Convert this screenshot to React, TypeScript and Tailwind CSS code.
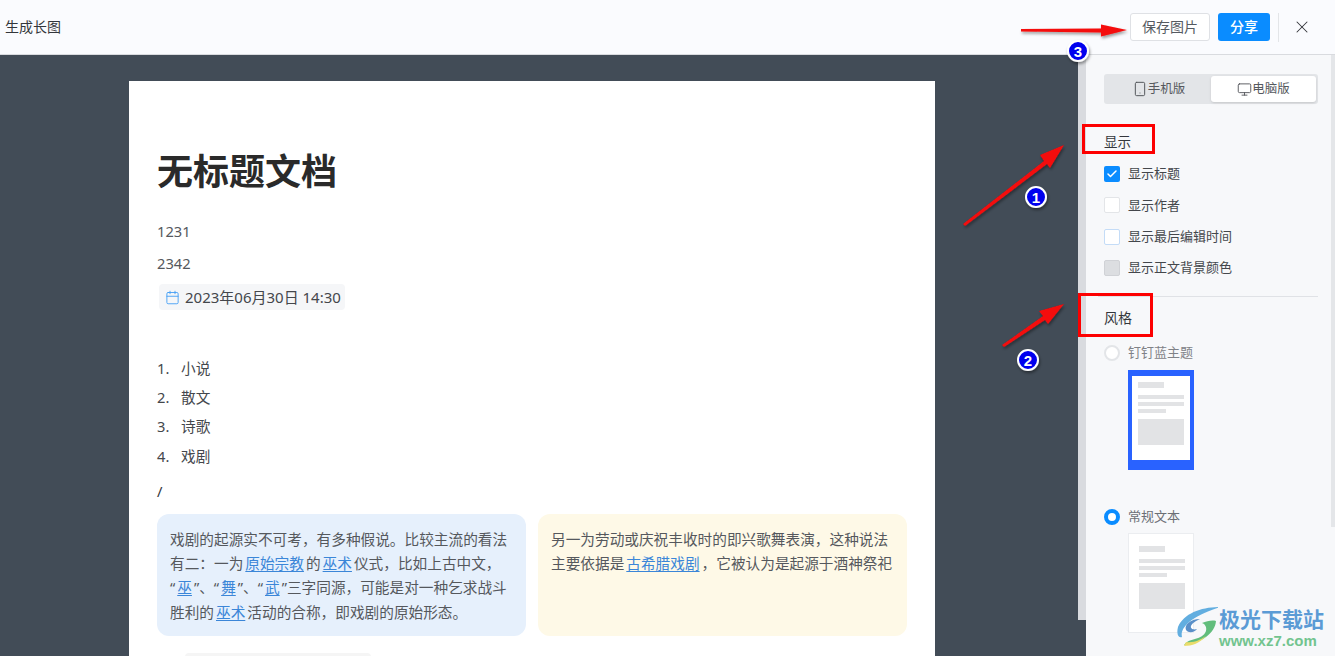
import { Calendar, Check, Monitor, Smartphone, X } from 'lucide-react';

const FONT = "font-['Noto_Sans','Noto_Sans_CJK_SC',sans-serif]";

function A({ children }: { children: string }) {
    return <span className="text-[#3b86d8] underline underline-offset-2 mx-[2px]">{children}</span>;
}

function OptionRow({ label, box }: { label: string; box: string }) {
    return (
        <div className="flex items-center h-[16px] gap-2 text-[13px] text-[#44474c]">
            <span className={`w-4 h-4 rounded-[2px] flex items-center justify-center ${box}`}>
                {box.includes('bg-[#0a8cff]') && <Check size={12} strokeWidth={3} className="text-white" />}
            </span>
            {label}
        </div>
    );
}

function Thumb({ border }: { border: string }) {
    return (
        <div className={`ml-6 w-[66px] h-[100px] bg-white flex flex-col ${border}`}>
            <div className="w-[26px] h-[6px] bg-[#e2e3e5]" />
            <div className="w-[46px] h-1 bg-[#e2e3e5] mt-[7px]" />
            <div className="w-[46px] h-1 bg-[#e2e3e5] mt-[3px]" />
            <div className="w-[28px] h-1 bg-[#e2e3e5] mt-[3px]" />
            <div className="w-[46px] h-[26px] bg-[#e2e3e5] mt-[6px]" />
        </div>
    );
}

function Annotations() {
    return (
        <>
            <svg className="absolute left-0 top-0 pointer-events-none" width="1335" height="656">
                <defs>
                    <filter id="sh" x="-20%" y="-20%" width="140%" height="140%">
                        <feDropShadow dx="1" dy="2" stdDeviation="1.5" floodColor="#000" floodOpacity="0.4" />
                    </filter>
                </defs>
                <g fill="#f40a0a" filter="url(#sh)">
                    <path d="M1021 29 L1101 28.5 L1101 24.5 L1127 30 L1101 36.5 L1101 32.5 L1021 31.5 Z" />
                    <path d="M963 224 L1044 161 L1040 155 L1064 145 L1050 168 L1047 164 L965 226 Z" />
                    <path d="M1002 345 L1043 316 L1039 311 L1064 304 L1048 324 L1045 320 L1004 347 Z" />
                </g>
                <g fill="none" stroke="#fd0000" strokeWidth="3">
                    <rect x="1083.5" y="125.5" width="70" height="27" />
                    <rect x="1079.5" y="294.5" width="72" height="41" />
                </g>
                <g stroke="#fff" strokeWidth="2" fill="#0000ee" filter="url(#sh)">
                    <circle cx="1078" cy="51" r="10" />
                    <circle cx="1036" cy="197" r="10" />
                    <circle cx="1028" cy="360" r="10" />
                </g>
                <g fill="#fff" fontSize="15" fontWeight="700" textAnchor="middle" fontFamily="'Liberation Sans', sans-serif">
                    <text x="1078" y="56.5">3</text>
                    <text x="1036" y="202.5">1</text>
                    <text x="1028" y="365.5">2</text>
                </g>
            </svg>
            {/* watermark */}
            <div className="absolute left-[1176px] top-[605px] flex items-start gap-[1px] pointer-events-none">
                <svg width="42" height="42" viewBox="0 0 42 42" fill="none">
                    <path d="M44 2 C26 2 8 8 2 22 C0 30 3 33 6 32 C4 24 12 12 44 2 Z" fill="#62aee0" />
                    <path d="M24 14 C14 14 8 20 10 25 C13 29 19 27 21 24 C18 25 14 24 15 21 C16 18 20 16 24 14 Z" fill="#5a8fc8" />
                    <path d="M40 16 C39 28 26 38 8 40 C14 32 26 36 30 26 C31 22 29 19 26 18 C31 16 36 15 40 16 Z" fill="#62bd7c" />
                    <path d="M30 31 C24 38 16 41 8 41 L10 37 C18 38 24 35 30 31 Z" fill="#e9dc6a" />
                </svg>
                <div className="flex flex-col font-bold leading-none font-['Noto_Sans_CJK_SC',sans-serif]">
                    <span className="text-[21px] text-[#5b9bd5] leading-[26px]">极光下载站</span>
                    <span className="text-[15px] text-[#72c48f] mt-[2px] font-['Liberation_Sans',sans-serif]">www.xz7.com</span>
                </div>
            </div>
        </>
    );
}

export default function App() {
    return (
        <div className={`relative w-[1335px] h-[656px] overflow-hidden flex flex-col ${FONT}`}>
            {/* 顶部栏 */}
            <header className="h-[55px] shrink-0 flex items-center pl-[5px] bg-[#fafbfe] border-b border-[#d9dbdf]">
                <span className="text-[14px] text-[#33363b] pb-[2px]">生成长图</span>
                <div className="ml-auto flex items-center">
                    <button className="w-[80px] h-[28px] pb-[2px] rounded-[3px] border border-[#dfe1e5] bg-white text-[14px] text-[#555a61]">
                        保存图片
                    </button>
                    <button className="w-[52px] h-[28px] pb-[2px] ml-2 rounded-[3px] bg-[#0a8cff] text-[14px] font-medium text-white">
                        分享
                    </button>
                    <div className="w-px h-[29px] bg-[#e3e5e8] ml-2" />
                    <span className="w-[46px] flex justify-center text-[#33363b]">
                        <X size={20} strokeWidth={1.25} />
                    </span>
                    <span className="w-[10px]" />
                </div>
            </header>

            <div className="flex flex-1 min-h-0">
                {/* 预览区 */}
                <main className="relative w-[1086px] shrink-0 bg-[#424c57] overflow-hidden pt-[26px] pl-[129px]">
                    <article className="w-[806px] h-[700px] bg-white px-7 pt-[64px] text-[14.67px] text-[#55585d]">
                        <h1 className="h-[54px] leading-[54px] text-[36px] font-bold text-[#2a2a2a]">无标题文档</h1>
                        <p className="mt-5 leading-[24px]">1231</p>
                        <p className="mt-2 leading-[24px]">2342</p>
                        <div className="mt-[9px] ml-[2px] w-[186px] h-[26px] rounded-[4px] bg-[#f5f6f8] flex items-center pl-[6px] gap-[5px] text-[15px] text-[#44474c] whitespace-nowrap">
                            <Calendar size={15} strokeWidth={1.4} className="text-[#3f9bf5]" />
                            2023年06月30日 14:30
                        </div>
                        <ol className="mt-[43px] text-[#44474c]">
                            {['小说', '散文', '诗歌', '戏剧'].map((item, i) => (
                                <li key={item} className="flex h-[29.4px] items-center">
                                    <span className="w-6">{i + 1}.</span>
                                    {item}
                                </li>
                            ))}
                        </ol>
                        <p className="mt-2 h-6 leading-6 text-[#33363b]">/</p>
                        <div className="mt-[11px] grid grid-cols-[369px_369px] gap-3">
                            <div className="h-[122px] rounded-xl bg-[#e6f0fc] px-[13px] pt-[13px] leading-[24.4px] whitespace-nowrap">
                                戏剧的起源实不可考，有多种假说。比较主流的看法<br />
                                有二：一为<A>原始宗教</A>的<A>巫术</A>仪式，比如上古中文，<br />
                                “<A>巫</A>”、“<A>舞</A>”、“<A>武</A>”三字同源，可能是对一种乞求战斗<br />
                                胜利的<A>巫术</A>活动的合称，即戏剧的原始形态。
                            </div>
                            <div className="h-[122px] rounded-xl bg-[#fef9e7] px-[13px] pt-[13px] leading-[24.4px] whitespace-nowrap">
                                另一为劳动或庆祝丰收时的即兴歌舞表演，这种说法<br />
                                主要依据是<A>古希腊戏剧</A>，它被认为是起源于酒神祭祀
                            </div>
                        </div>
                        <div className="mt-[17px] ml-7 w-[186px] h-6 rounded-[4px] bg-[#f5f5f5]" />
                    </article>
                    <div className="absolute right-0 top-0 w-2 h-[565px] bg-[#d9dbdf]" />
                </main>

                {/* 设置面板 */}
                <aside className="relative flex-1 bg-[#f7f8fa] pl-[18px] pr-[17px] pt-[19px]">
                    <div className="h-[30px] rounded-[3px] bg-[#e3e5e8] flex items-center p-[2px] text-[12.5px] text-[#55585d]">
                        <div className="w-[105px] flex items-center justify-center">
                            <Smartphone size={16} strokeWidth={1.5} />
                            手机版
                        </div>
                        <div className="w-[105px] h-[26px] rounded-[3px] bg-white flex items-center justify-center shadow-sm">
                            <Monitor size={15} strokeWidth={1.5} />
                            电脑版
                        </div>
                    </div>
                    <h3 className="mt-[28px] h-[20px] leading-[20px] text-[13.5px] text-[#33363b]">显示</h3>
                    <div className="mt-[14px] flex flex-col gap-[15.4px]">
                        <OptionRow label="显示标题" box="bg-[#0a8cff]" />
                        <OptionRow label="显示作者" box="bg-white border border-[#e3e5e8]" />
                        <OptionRow label="显示最后编辑时间" box="bg-white border border-[#c4dcf7]" />
                        <OptionRow label="显示正文背景颜色" box="bg-[#dcdee1] border border-[#d0d2d6]" />
                    </div>
                    <div className="mt-5 -ml-[6px] border-t border-[#e0e2e6]" />
                    <h3 className="mt-[11px] h-[20px] leading-[20px] text-[14px] text-[#33363b]">风格</h3>
                    <div className="mt-[17px] flex items-center h-4 gap-2 text-[13px] text-[#7f8287]">
                        <span className="w-4 h-4 rounded-full bg-white border-2 border-[#e3e5e8]" />
                        钉钉蓝主题
                    </div>
                    <div className="mt-[9px]">
                        <Thumb border="border-x-4 border-t-[6px] border-b-[10px] border-[#2962ff] pt-[6px] pl-[6px]" />
                    </div>
                    <div className="mt-[39px] flex items-center h-4 gap-2 text-[13px] text-[#6b6f75]">
                        <span className="w-4 h-4 rounded-full bg-white border-[4px] border-[#0a8cff]" />
                        常规文本
                    </div>
                    <div className="mt-2">
                        <Thumb border="border border-[#ebedf0] pt-3 pl-[10px]" />
                    </div>
                    <div className="absolute right-0 top-0 w-1 h-[472px] bg-[#e4e6e9]" />
                </aside>
            </div>
            <Annotations />
        </div>
    );
}
